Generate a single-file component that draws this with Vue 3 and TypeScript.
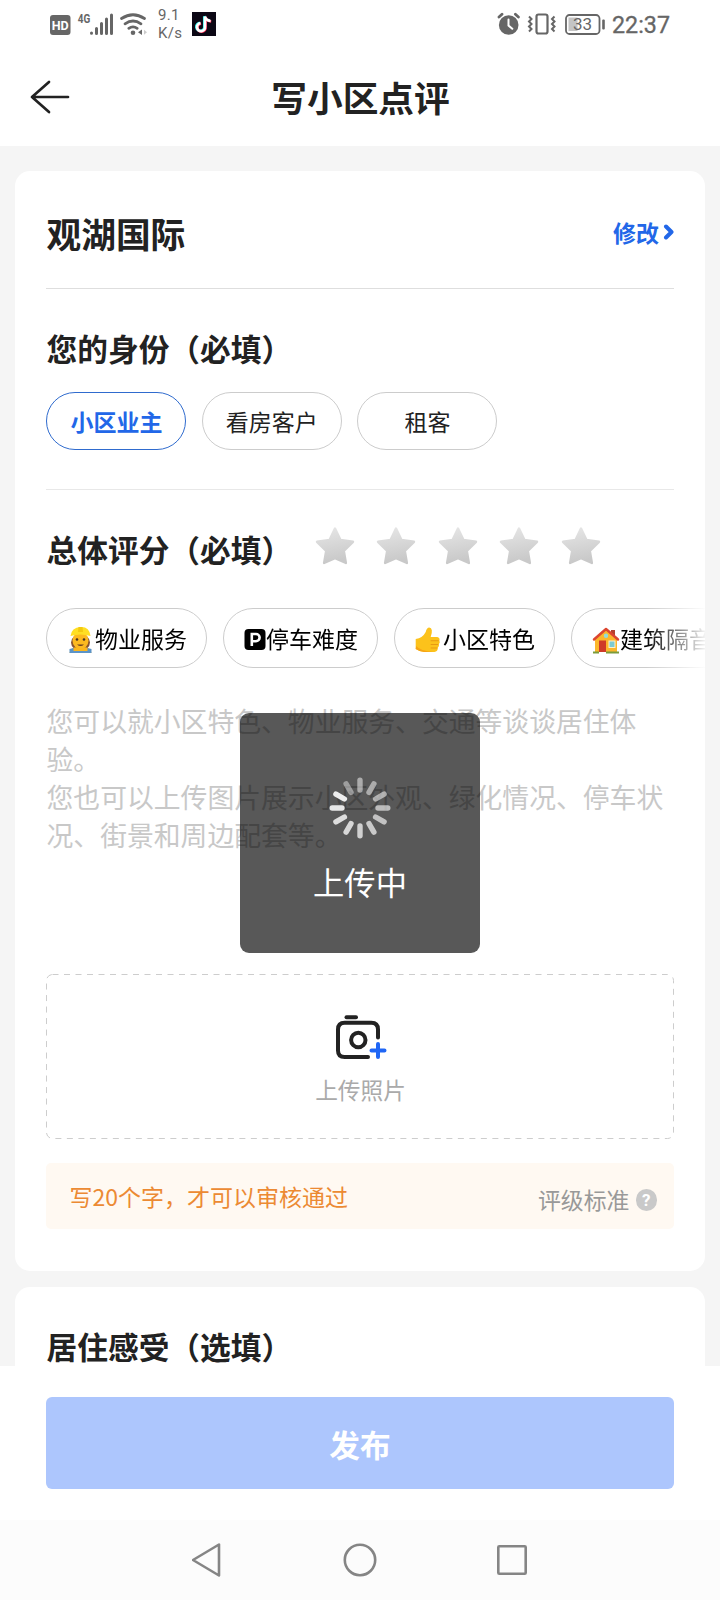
<script setup lang="ts">
import { ref } from 'vue'

interface Tag { icon: 'worker' | 'parking' | 'thumb' | 'house'; label: string }

const roles: string[] = ['小区业主', '看房客户', '租客']
const activeRole = ref<string>('小区业主')
const tags: Tag[] = [
  { icon: 'worker', label: '物业服务' },
  { icon: 'parking', label: '停车难度' },
  { icon: 'thumb', label: '小区特色' },
  { icon: 'house', label: '建筑隔音' },
]
const spokes: number[] = [0.5, 0.5, 0.55, 0.6, 0.64, 0.68, 0.72, 0.76, 0.8, 0.86, 0.9, 0.42]
</script>

<template>
  <div class="screen">
    <div class="status">
      <svg class="status-left" width="110" height="48" viewBox="0 0 110 48">
        <rect x="2" y="15" width="20.500" height="20" rx="3" fill="#666" />
        <text x="12.200" y="30" class="hd" text-anchor="middle" textLength="17" lengthAdjust="spacingAndGlyphs">HD</text>
        <text x="29.700" y="23" class="net" textLength="12.500" lengthAdjust="spacingAndGlyphs">4G</text>
        <g stroke="#666" stroke-width="3" stroke-linecap="round">
          <path d="M43.500 33v.2M48.500 28.500v5M53.500 23.500v10M58.500 19v14.500M63.500 15v18.500" />
        </g>
        <g fill="none" stroke="#666" stroke-width="2.800" stroke-linecap="round">
          <path d="M73.500 18.500q11.500-7.500 23 0M77 23.800q8-5.500 16 0M80.800 28.300q4.200-2.800 8.400 0" />
        </g>
        <circle cx="85" cy="32.800" r="2.300" fill="#666" />
        <path d="M94 29.500v5.500l-4-2.700z" fill="#666" /><path d="M96 29.800v5l3-2.500z" fill="#ccc" />
      </svg>
      <div class="speed"><span>9.1</span><span>K/s</span></div>
      <svg class="music" width="24" height="24" viewBox="0 0 24 24">
        <rect width="24" height="24" fill="#0b0714" />
        <g fill="none" stroke-width="2.700">
          <path d="M13 4.500v10.200a4 4 0 1 1-4.500-3.500M13 4.500q1 4 5.600 4.500" stroke="#25f4ee" transform="translate(-.7 -.3)" />
          <path d="M13 4.500v10.200a4 4 0 1 1-4.500-3.500M13 4.500q1 4 5.600 4.500" stroke="#fe2c55" transform="translate(.6 .5)" />
          <path d="M13 4.500v10.200a4 4 0 1 1-4.500-3.500M13 4.500q1 4 5.600 4.500" stroke="#fff" />
        </g>
      </svg>
      <svg class="status-right" width="110" height="48" viewBox="496 0 110 48">
        <circle cx="508.700" cy="25" r="9.800" fill="#666" />
        <path d="M508.500 19.500v6l3.800 3.300" fill="none" stroke="#fff" stroke-width="2" stroke-linecap="round" />
        <path d="M499 17l3-2.700M518.400 17l-3-2.700" stroke="#666" stroke-width="2.800" stroke-linecap="round" />
        <rect x="536.500" y="14.500" width="11" height="19" rx="2" fill="none" stroke="#666" stroke-width="2.200" />
        <path d="M529 16.500l2.500 2.500-2.500 2.500 2.500 2.500-2.500 2.500 2.500 2.500-2.500 2.500M554.500 16.500l-2.500 2.500 2.500 2.500-2.500 2.500 2.500 2.500-2.500 2.500 2.500 2.500" fill="none" stroke="#666" stroke-width="2" />
        <rect x="568.500" y="17.500" width="9" height="13.500" fill="#c4c4c4" />
        <rect x="566" y="15" width="33.500" height="19" rx="3.500" fill="none" stroke="#666" stroke-width="1.800" />
        <rect x="602.200" y="19.500" width="2.600" height="10" rx="1" fill="#666" />
        <text x="582.600" y="30.200" class="battery" text-anchor="middle">33</text>
      </svg>
      <span class="clock">22:37</span>
    </div>

    <header class="header">
      <svg width="42" height="36" viewBox="0 0 42 36" class="back">
        <path d="M39 18H3M20 3L3 18l17 15" fill="none" stroke="#222" stroke-width="2.700" stroke-linecap="round" stroke-linejoin="round" />
      </svg>
      <h1>写小区点评</h1>
    </header>

    <main class="content">
      <section class="card">
        <div class="community">
          <h2>观湖国际</h2>
          <div class="edit">
            <span>修改</span>
            <svg width="11" height="16" viewBox="0 0 11 16"><path d="M3 2.500L8.500 8 3 13.500" fill="none" stroke="#2267e8" stroke-width="4" stroke-linecap="round" stroke-linejoin="round" /></svg>
          </div>
        </div>

        <div class="identity">
          <h3>您的身份（必填）</h3>
          <div class="roles">
            <button v-for="role in roles" :key="role" class="role" :class="{ active: role === activeRole }" @click="activeRole = role">{{ role }}</button>
          </div>
        </div>

        <div class="rating">
          <h3>总体评分（必填）</h3>
          <svg v-for="n in 5" :key="n" class="star" width="42" height="40" viewBox="0 0 42 40">
            <defs><linearGradient :id="'star' + n" x1="0" y1="0" x2="0.200" y2="1"><stop offset="0" stop-color="#e6e6e6" /><stop offset="1" stop-color="#c9c9c9" /></linearGradient></defs>
            <path d="M21 2.500l5.500 11.500 12.500 1.800-9.200 9 2.100 12.200L21 32.200 10.100 37l2.100-12.200-9.200-9L15.500 14z" :fill="'url(#star' + n + ')'" :stroke="'url(#star' + n + ')'" stroke-width="2.400" stroke-linejoin="round" />
          </svg>
        </div>

        <div class="tags">
          <div v-for="tag in tags" :key="tag.label" class="tag">
            <svg v-if="tag.icon === 'worker'" width="26" height="28" viewBox="1.500 -2 26 28">
              <ellipse cx="13" cy="16.500" rx="9.500" ry="8" fill="#8a5430" />
              <path d="M2 27q1-6 8-6h6q7 0 8 6z" fill="#fcb61c" />
              <path d="M2 27v-4l4-1v3h14v-3l4 1v4z" fill="#5c94c8" />
              <ellipse cx="13" cy="14.500" rx="8" ry="8.500" fill="#fcb91f" />
              <path d="M3 10Q4 1.500 13 1t10 9q-10-3-20 0z" fill="#ffdf24" />
              <path d="M11 1h4l.5 5h-5z" fill="#f3c90f" />
              <circle cx="9.500" cy="13.500" r="1.300" fill="#4a3424" /><circle cx="16.500" cy="13.500" r="1.300" fill="#4a3424" />
              <path d="M9.500 18.500q3.500 3 7 0z" fill="#6b3d1e" />
            </svg>
            <svg v-else-if="tag.icon === 'parking'" width="20" height="28" viewBox="2.500 -2.500 20 28">
              <rect x="1" y="2.500" width="21" height="21" rx="4" fill="#000" />
              <path d="M8.300 19.500V7.500h4.200a3.600 3.600 0 0 1 0 7.200H8.300" fill="none" stroke="#fff" stroke-width="2.600" />
            </svg>
            <svg v-else-if="tag.icon === 'thumb'" width="26" height="28" viewBox="2.800 -2 26 28">
              <path d="M1.500 13q7-1 10-7 1-4.500 3.500-4.500 4.500.5 1.500 9.500h6.500q3 .5 2.200 3.500 1 2-.5 3.500.6 2.500-1 3.500 0 4-3.500 4.500H10q-5-.5-8.500-3z" fill="#fcc21b" />
              <path d="M16.500 14.700h8M16.500 18.500h7.500M16.500 22h6.500" stroke="#e79a12" stroke-width="1.100" />
              <path d="M2 20q4 5 17 6h-9q-5-.5-8.500-3z" fill="#f7a416" />
            </svg>
            <svg v-else width="26" height="28" viewBox="2 -2 26 28">
              <rect x="19" y="4" width="4" height="8" fill="#b4412e" />
              <path d="M3 13L14 3l11 10v13H3z" fill="#fcb62b" />
              <path d="M2 13.500L14 3l12 10.500" fill="none" stroke="#dc4630" stroke-width="2.500" stroke-linejoin="round" stroke-linecap="round" />
              <circle cx="14" cy="9.700" r="2.200" fill="#93dbd7" />
              <rect x="7" y="14.500" width="7" height="11.500" fill="#cf3a28" />
              <rect x="17" y="15" width="6" height="6.500" fill="#7ecbd2" stroke="#fff0cc" />
              <path d="M1 26.500h6M14 26.500h13" stroke="#7a9c3c" stroke-width="2" />
            </svg>
            <span>{{ tag.label }}</span>
          </div>
        </div>

        <div class="placeholder">您可以就小区特色、物业服务、交通等谈谈居住体<br>验。<br>您也可以上传图片展示小区外观、绿化情况、停车状<br>况、街景和周边配套等。</div>

        <div class="upload">
          <svg class="dashes" width="628" height="165" viewBox="0 0 628 165">
            <rect x=".5" y=".5" width="627" height="164" rx="6" fill="none" stroke="#cdcdcd" stroke-width="1" stroke-dasharray="6 5.500" />
          </svg>
          <svg class="camera" width="52" height="46" viewBox="0 0 52 46">
            <g fill="none" stroke="#222" stroke-width="4" stroke-linecap="round">
              <path d="M43 22.500V14.500q0-6.700-6.700-6.700H9.700Q3 7.800 3 14.500v21Q3 42 9.700 42H33" />
              <path d="M11.500 2.200H21" /><circle cx="23.300" cy="25" r="7.200" />
            </g>
            <path d="M43 29v13M36.500 35.500h13" stroke="#1f66f5" stroke-width="4" stroke-linecap="round" />
          </svg>
          <span>上传照片</span>
        </div>

        <div class="tip">
          <span class="need">写20个字，才可以审核通过</span>
          <div class="standard">
            <span>评级标准</span>
            <i>?</i>
          </div>
        </div>
      </section>

      <section class="card feeling"><h3>居住感受（选填）</h3></section>
    </main>

    <footer class="submit"><button>发布</button></footer>

    <nav class="nav">
      <svg width="32" height="36" viewBox="1 0 32 36"><path d="M28 2.500v31L2 18z" fill="none" stroke="#858585" stroke-width="2.600" stroke-linejoin="round" /></svg>
      <svg width="36" height="36" viewBox="0 0 36 36"><circle cx="18" cy="18" r="15.200" fill="none" stroke="#858585" stroke-width="2.600" /></svg>
      <svg width="32" height="36" viewBox="0 0 32 36"><rect x="2.300" y="4.300" width="27.400" height="27.400" rx="1" fill="none" stroke="#858585" stroke-width="2.600" /></svg>
    </nav>

    <div class="toast">
      <svg width="64" height="64" viewBox="-32 -32 64 64">
        <path v-for="(alpha, i) in spokes" :key="i" d="M0-27.800V-18" stroke="#fff" stroke-width="5.400" stroke-linecap="round" :stroke-opacity="alpha" :transform="`rotate(${i * 30})`" />
      </svg>
      <span>上传中</span>
    </div>
  </div>
</template>

<style>
body { margin: 0; background: #fff; }
</style>

<style scoped>
.screen {
  position: relative;
  display: flex;
  flex-direction: column;
  width: 720px;
  height: 1600px;
  overflow: hidden;
  background: #f5f5f5;
  color: #222;
  font-family: "Noto Sans CJK SC", sans-serif;
}
svg { display: block; flex: none; }
h1, h2, h3 { margin: 0; font-weight: 700; white-space: nowrap; }
button { padding: 0; font-family: inherit; }

.status { display: flex; flex: none; height: 48px; padding-left: 48px; background: #fff; color: #666; font-family: Roboto, sans-serif; }
.hd { font: 700 13.500px Roboto, sans-serif; fill: #fff; }
.net { font: 700 12.500px Roboto, sans-serif; fill: #666; }
.battery { font: 400 17px Roboto, sans-serif; fill: #666; }
.speed { display: flex; flex-direction: column; width: 34px; padding-top: 6px; font-size: 15px; line-height: 18px; letter-spacing: .3px; }
.music { margin-top: 12px; }
.status-right { margin-left: 280px; }
.clock { margin-left: 6px; font-size: 23.300px; line-height: 50px; -webkit-text-stroke: .3px #666; }

.header { display: grid; flex: none; grid-template-columns: 42px 1fr 42px; align-items: center; height: 98px; padding: 0 29px; background: #fff; }
.header h1 { font-size: 35.700px; line-height: 50px; text-align: center; padding: 0 0 1px 1px; }

.content { flex: none; height: 1220px; padding: 25px 15px 0; box-sizing: border-box; overflow: hidden; }
.card { box-sizing: border-box; height: 1100px; padding: 0 31px; border-radius: 15px; background: #fff; }

.community { display: flex; align-items: center; justify-content: space-between; height: 117px; border-bottom: 1px solid #dedede; }
.community h2 { font-size: 34.700px; padding: 6px 0 0 .5px; }
.edit { display: flex; align-items: center; gap: 4px; padding-top: 5px; color: #2267e8; font-size: 23px; font-weight: 700; }

.identity { height: 201px; border-bottom: 1px solid #e8e8e8; box-sizing: border-box; padding-top: 36px; }
h3 { padding-left: .6px; font-size: 30.700px; line-height: 46px; }
.roles { display: flex; gap: 15.700px; margin-top: 21px; }
.role { width: 140px; height: 58px; border: 1px solid #ccc; border-radius: 29px; background: #fff; color: #222; font-size: 23px; line-height: 54px; padding-bottom: 1px; }
.role.active { border-color: #2f6bce; color: #2267e8; font-weight: 700; padding-left: 1px; }

.rating { display: flex; height: 118px; }
.rating h3 { width: 267px; padding-top: 36px; }
.star { margin: 36px 19.600px 0 0; }

.tags { display: flex; gap: 16px; width: 659px; height: 60px; overflow: hidden; -webkit-mask-image: linear-gradient(to right, #000 600px, transparent 662px); mask-image: linear-gradient(to right, #000 600px, transparent 662px); }
.tag { display: flex; align-items: center; flex: none; height: 60px; padding: 0 19px 0 22px; box-sizing: border-box; border: 1px solid #ccc; border-radius: 30px; color: #000; font-size: 23px; white-space: nowrap; }
.tag svg { overflow: visible; }

.placeholder { height: 272px; margin-top: 34px; padding-left: .5px; color: #c8c8c8; font-size: 26.820px; line-height: 38px; white-space: nowrap; }
.upload { position: relative; display: flex; flex-direction: column; align-items: center; height: 165px; box-sizing: border-box; padding: 41px 0 0; color: #aaa; font-size: 22.700px; }
.upload .dashes { position: absolute; inset: 0; }
.camera { margin-left: 1px; }
.upload span { margin: 11px 0 0 1px; line-height: 36px; }

.tip { display: flex; justify-content: space-between; height: 66px; margin-top: 24px; padding: 0 17px 0 23.500px; border-radius: 5px; background: #fff9f2; font-size: 23px; line-height: 66px; }
.need { color: #ec8a33; }
.standard { display: flex; align-items: center; gap: 6px; color: #999; font-size: 22.900px; }
.standard span { padding-top: 6px; }
.standard i { display: grid; place-items: center; width: 21.500px; height: 21.500px; margin-top: 8px; border-radius: 50%; background: #c9c9c9; color: #fff; font: 700 17px/22px Roboto, sans-serif; }

.feeling { height: 140px; margin-top: 16px; padding-top: 36px; }

.submit { flex: none; height: 154px; padding: 31px 46px 0; box-sizing: border-box; background: #fff; }
.submit button { display: block; width: 628px; height: 92px; border: 0; border-radius: 6px; background: #adc6fd; color: #fff; font-size: 30.700px; font-weight: 700; }

.nav { display: flex; flex: none; align-items: center; justify-content: center; gap: 118px; height: 80px; background: #fcfcfc; }

.toast { position: absolute; left: 240px; top: 713px; display: flex; flex-direction: column; align-items: center; width: 240px; height: 240px; padding-top: 63px; box-sizing: border-box; border-radius: 9px; background: rgba(0, 0, 0, .655); color: #fff; font-size: 31.300px; }
.toast span { margin-top: 19px; line-height: 46px; }
</style>
